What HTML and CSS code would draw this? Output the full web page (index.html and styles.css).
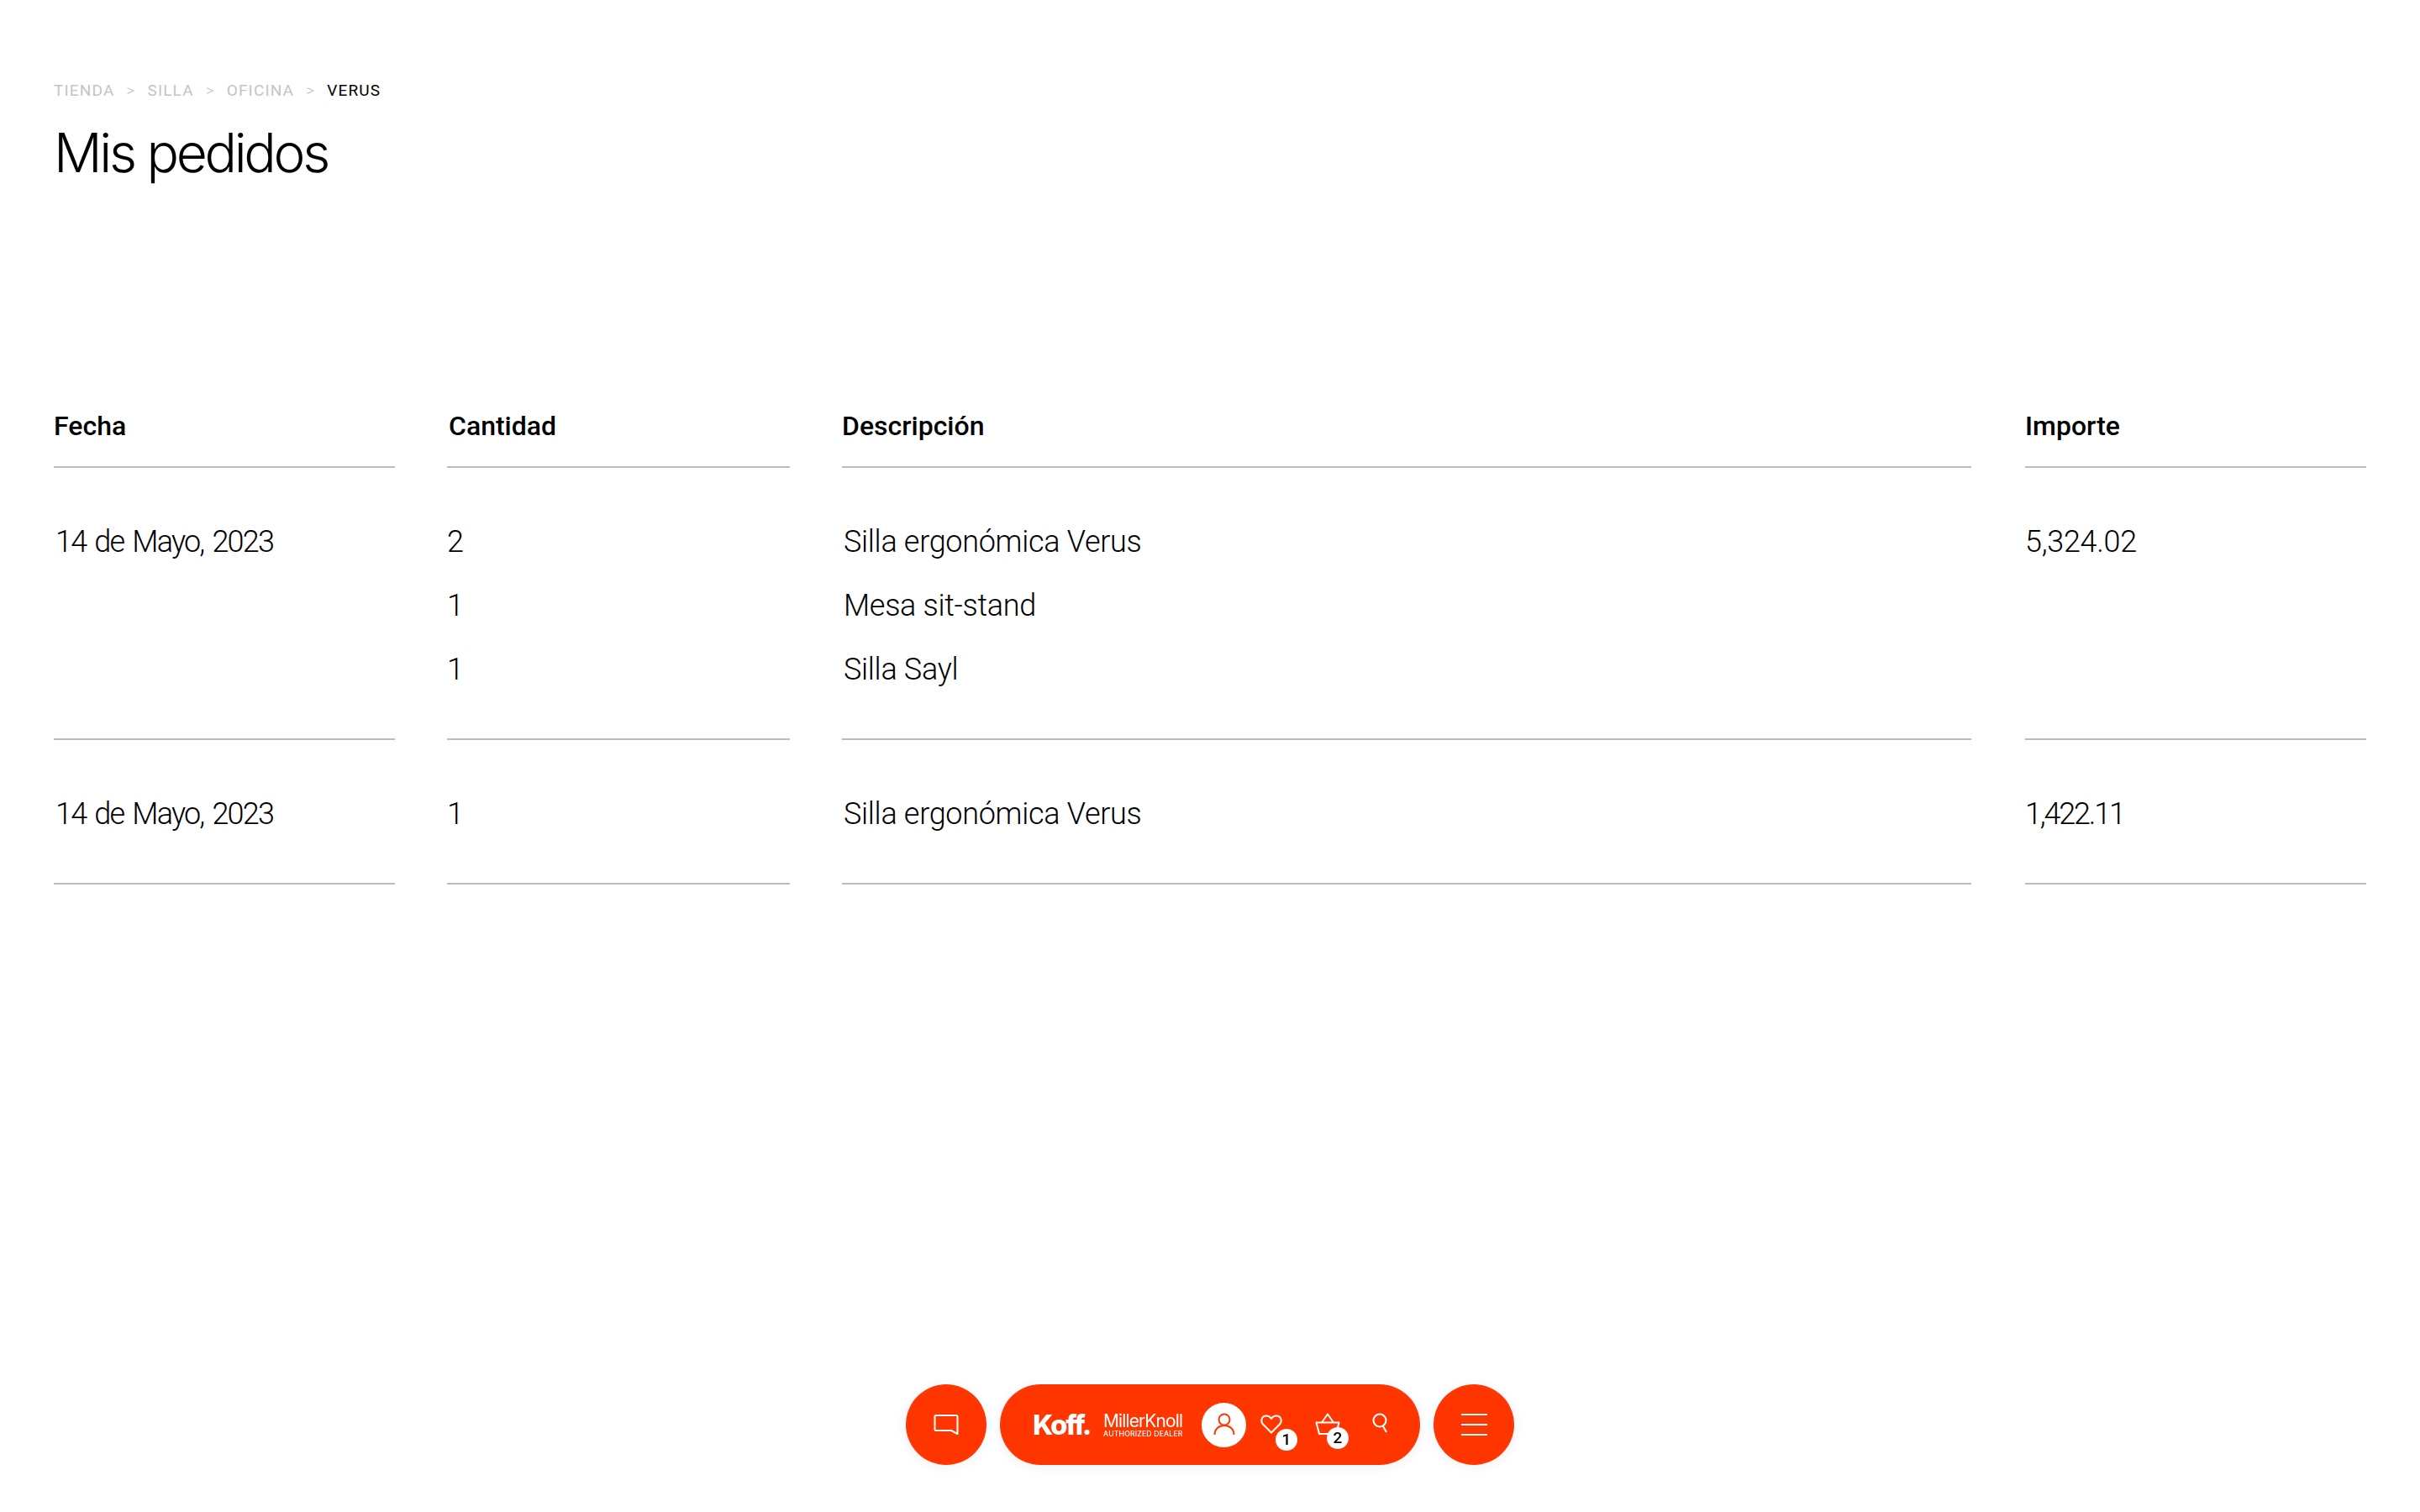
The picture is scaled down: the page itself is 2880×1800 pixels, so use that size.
FILE: index.html
```html
<!DOCTYPE html>
<html lang="es">
<head>
<meta charset="utf-8">
<title>Mis pedidos</title>
<link rel="stylesheet" href="styles.css">
</head>
<body>
<main class="page">
  <nav class="crumbs">
    <span class="crumb">TIENDA</span><span class="sep">&gt;</span>
    <span class="crumb">SILLA</span><span class="sep">&gt;</span>
    <span class="crumb">OFICINA</span><span class="sep">&gt;</span>
    <span class="crumb current">VERUS</span>
  </nav>
  <h1 class="title">Mis pedidos</h1>
  <section class="orders">
    <div class="row head">
      <div class="cell">Fecha</div>
      <div class="cell shifted">Cantidad</div>
      <div class="cell">Descripción</div>
      <div class="cell">Importe</div>
    </div>
    <div class="row">
      <div class="cell"><p class="line date">14 de Mayo, 2023</p></div>
      <div class="cell qty"><p class="line">2</p><p class="line">1</p><p class="line">1</p></div>
      <div class="cell"><p class="line">Silla ergonómica Verus</p><p class="line">Mesa sit-stand</p><p class="line">Silla Sayl</p></div>
      <div class="cell"><p class="line">5,324.02</p></div>
    </div>
    <div class="row">
      <div class="cell"><p class="line date">14 de Mayo, 2023</p></div>
      <div class="cell qty"><p class="line">1</p></div>
      <div class="cell"><p class="line">Silla ergonómica Verus</p></div>
      <div class="cell"><p class="line tight">1,422.11</p></div>
    </div>
  </section>
</main>
<div class="dock">
  <button class="round" aria-label="Chat">
    <svg width="32" height="26" viewBox="0 0 32 26" fill="none" stroke="#fff" stroke-width="2" stroke-linejoin="round"><path d="M4 2h24a1.500 1.500 0 0 1 1.500 1.500v20.500L22 20H4a1.500 1.500 0 0 1-1.500-1.500V3.500A1.500 1.500 0 0 1 4 2z"/></svg>
  </button>
  <div class="pill">
    <div class="koff">Koff.</div>
    <div class="dealer"><span class="mk">MillerKnoll</span><span class="auth">AUTHORIZED DEALER</span></div>
    <div class="user">
      <svg width="26" height="28" viewBox="0 0 26 28" fill="none" stroke="#ff3600" stroke-width="2"><circle cx="13" cy="8" r="6.500"/><path d="M1.500 26c0-6.500 5-11 11.500-11s11.500 4.500 11.500 11"/></svg>
    </div>
    <div class="tool heart">
      <svg width="26" height="23" viewBox="0 0 26 23" fill="none" stroke="#fff" stroke-width="2" stroke-linejoin="round"><path d="M13 21.500 3 11.500C-.5 7.500 1.800 1.500 7 1.500c2.800 0 4.800 1.500 6 3.500 1.200-2 3.200-3.500 6-3.500 5.200 0 7.500 6 4 10z"/></svg>
      <span class="badge">1</span>
    </div>
    <div class="tool basket">
      <svg width="30" height="27" viewBox="0 0 30 27" fill="none" stroke="#fff" stroke-width="2" stroke-linejoin="round"><path d="M1.500 11.500h27l-3.500 13.500H5z"/><path d="M8 11.500 15 1.500l7 10"/></svg>
      <span class="badge">2</span>
    </div>
    <div class="tool search">
      <svg width="20" height="24" viewBox="0 0 20 24" fill="none" stroke="#fff" stroke-width="2"><circle cx="9" cy="9" r="7.500"/><path d="m13 16 4 7"/></svg>
    </div>
  </div>
  <button class="round" aria-label="Menú">
    <span class="burger"><i></i><i></i><i></i></span>
  </button>
</div>
</body>
</html>
```
FILE: styles.css
```css
* { box-sizing: border-box; }
html, body { margin: 0; background: #fff; }
body { font-family: Roboto, "Liberation Sans", sans-serif; color: #000; }
.page { padding: 96px 64px 0; }
.crumbs { display: flex; align-items: center; height: 22px; font-size: 19px; letter-spacing: 1.15px; color: #c4c4c4; }
.sep { margin: 0 14px; font-weight: 300; }
.current { color: #000; }
.title { margin: 24px 0 0; font-family: Inter, sans-serif; font-weight: 300; font-size: 64px; line-height: 80px; letter-spacing: -3.3px; }
.orders { margin-top: 266px; }
.row { display: grid; grid-template-columns: 406px 408px 1344px 408px; column-gap: 62px; width: 2752px; }
.row > .cell:last-child { margin-left: 2px; }
.cell { border-bottom: 2px solid #bdbdbd; padding: 50px 0 44px; }
.row > .cell:not(:last-child) .line { padding-left: 2px; }
.row > .qty .line { margin-left: -2px; }
.head { font-size: 32px; font-weight: 500; line-height: 38px; }
.head .cell { padding: 0 0 29px; }
.head .shifted { padding-left: 2px; }
.line { margin: 0; height: 76px; font-size: 36px; font-weight: 300; line-height: 76px; letter-spacing: -.3px; }
.date { letter-spacing: -1.8px; word-spacing: 3px; }
.tight { letter-spacing: -2.2px; }
.dock { position: fixed; left: 1078px; bottom: 56px; display: flex; gap: 16px; }
.round { width: 96px; height: 96px; padding: 0; border: 0; border-radius: 50%; background: #ff3600; display: flex; align-items: center; justify-content: center; box-shadow: 0 2px 16px rgba(0,0,0,.06); }
.pill { width: 500px; height: 96px; padding-left: 39px; border-radius: 48px; background: #ff3600; display: flex; align-items: center; color: #fff; box-shadow: 0 2px 16px rgba(0,0,0,.06); }
.koff { width: 84px; font-family: Inter, sans-serif; font-weight: 800; font-size: 33px; letter-spacing: -2.1px; line-height: 36px; }
.dealer { width: 95px; display: flex; flex-direction: column; padding-top: 2px; font-family: Inter, sans-serif; }
.mk { font-size: 21px; font-weight: 400; line-height: 20px; letter-spacing: -.9px; white-space: nowrap; }
.auth { font-size: 8.700px; font-weight: 500; line-height: 10px; letter-spacing: .15px; white-space: nowrap; }
.user { margin-left: 22px; width: 53px; height: 53px; border-radius: 50%; background: #fff; display: flex; align-items: center; justify-content: center; }
.tool { position: relative; display: flex; }
.heart { margin-left: 17px; margin-top: -2px; }
.basket { margin-left: 39px; margin-top: -2px; }
.search { margin-left: 38px; margin-top: -4px; }
.badge { position: absolute; width: 26px; height: 26px; border-radius: 50%; background: #fff; color: #000; font-size: 19px; font-weight: 500; line-height: 26px; text-align: center; }
.heart .badge { left: 18px; top: 17px; }
.basket .badge { left: 14px; top: 17px; }
.burger { display: flex; flex-direction: column; gap: 10px; width: 31px; }
.burger i { display: block; height: 2px; background: #fff; }
```
